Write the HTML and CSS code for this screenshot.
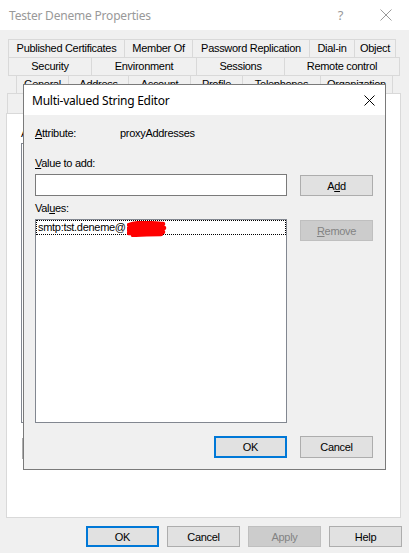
FILE: index.html
```html
<!DOCTYPE html>
<html lang="en">
<head>
    <meta charset="UTF-8">
    <meta name="viewport" content="width=device-width, initial-scale=1.0">
    <title>Tester Deneme Properties</title>
    <link rel="stylesheet" href="styles.css">
</head>
<body>
    <div class="window">
        <div class="titlebar">
            <span class="title">Tester Deneme Properties</span>
            <span class="help">?</span>
            <svg class="close" width="12" height="12" viewBox="0 0 12 12">
                <path d="M0.5 0.5 L11.5 11.5 M11.5 0.5 L0.5 11.5" stroke="#9a9a9a" stroke-width="1" fill="none"/>
            </svg>
        </div>

        <div class="sheet">
            <div class="tabrow row1">
                <div class="tab">Published Certificates</div>
                <div class="tab">Member Of</div>
                <div class="tab">Password Replication</div>
                <div class="tab">Dial-in</div>
                <div class="tab">Object</div>
            </div>
            <div class="tabrow row2">
                <div class="tab">Security</div>
                <div class="tab">Environment</div>
                <div class="tab">Sessions</div>
                <div class="tab">Remote control</div>
            </div>
            <div class="tabrow row3">
                <div class="tab">General</div>
                <div class="tab">Address</div>
                <div class="tab">Account</div>
                <div class="tab">Profile</div>
                <div class="tab">Telephones</div>
                <div class="tab">Organization</div>
            </div>
            <!-- front row is hidden by the editor, only its edges show -->
            <div class="tabrow row4">
                <div class="tab"></div>
                <div class="tab"></div>
                <div class="tab selected"></div>
            </div>

            <div class="page">
                <div class="page-label">Attributes:</div>
                <div class="attr-list"></div>
                <div class="page-buttons">
                    <button class="btn"></button>
                </div>
            </div>
        </div>

        <div class="actions">
            <button class="btn default">OK</button>
            <button class="btn">Cancel</button>
            <button class="btn" disabled>Apply</button>
            <button class="btn">Help</button>
        </div>
    </div>

    <!-- modal editor, sits on top of the properties window -->
    <div class="dialog">
        <div class="dialog-titlebar">
            <span class="dialog-title">Multi-valued String Editor</span>
            <svg class="dialog-close" width="11" height="11" viewBox="0 0 11 11">
                <path d="M0.5 0.5 L10.5 10.5 M10.5 0.5 L0.5 10.5" stroke="#000" stroke-width="1" fill="none"/>
            </svg>
        </div>
        <div class="dialog-body">
            <div class="attr-row">
                <span class="attr-name"><u>A</u>ttribute:</span>
                <span>proxyAddresses</span>
            </div>

            <div class="field-label"><u>V</u>alue to add:</div>
            <div class="editor-grid">
                <input type="text" class="value-input">
                <button class="btn side">A<u>d</u>d</button>
            </div>

            <div class="field-label values-label">Val<u>u</u>es:</div>
            <div class="editor-grid">
                <div class="listbox">
                    <div class="list-item">
                        <span>smtp:tst.deneme@</span>
                        <svg class="redact" width="40" height="16" viewBox="0 0 40 16">
                            <path d="M2 4 C10 1, 22 2, 36 3 M1 8 C12 6, 26 6, 37 7 M2 12 C12 10, 26 10, 36 11 M6 14 C16 13, 28 13, 34 13" stroke="#ff0000" stroke-width="4.5" stroke-linecap="round" fill="none"/>
                        </svg>
                    </div>
                </div>
                <button class="btn side" disabled><u>R</u>emove</button>
            </div>

            <div class="dialog-footer">
                <button class="btn default">OK</button>
                <button class="btn">Cancel</button>
            </div>
        </div>
    </div>
</body>
</html>
```

FILE: styles.css
```css
* {
    box-sizing: border-box;
}
body {
    margin: 0;
    background: #f0f0f0;
    font-family: "Liberation Sans", Arial, sans-serif;
    font-size: 11px;
    letter-spacing: -0.3px;
    color: #000;
}
.window {
    width: 409px;
    height: 553px;
    overflow: hidden;
}
.titlebar {
    height: 30px;
    background: #fff;
    display: flex;
    align-items: center;
    padding-left: 9px;
}
.title {
    font-family: "Noto Sans", sans-serif;
    font-size: 12px;
    letter-spacing: -0.2px;
    color: #999;
    flex: 1;
}
.help {
    font-family: "Noto Sans", sans-serif;
    font-size: 13px;
    color: #999;
    margin-right: 37px;
}
.close {
    margin-right: 17px;
}

.sheet {
    padding-top: 9px;
}
.tabrow {
    display: grid;
    height: 19px;
    margin-top: -1px;
}
.row1 {
    grid-template-columns: 116px 68px 117px 45px 42px;
    margin-left: 8px;
    margin-top: 0;
}
.row2 {
    grid-template-columns: 83px 105px 88px 116px;
    margin-left: 8px;
}
.row3 {
    grid-template-columns: 52px 60px 62px 52px 78px 73px;
    margin-left: 16px;
}
.row4 {
    grid-template-columns: 200px 60px 134px;
    margin-left: 7px;
    height: 21px;
}
.tab {
    border: 1px solid #d9d9d9;
    border-right: none;
    background: #f0f0f0;
    text-align: center;
    line-height: 16px;
    white-space: nowrap;
    overflow: hidden;
}
.tab:last-child {
    border-right: 1px solid #d9d9d9;
}
.tab.selected {
    background: #fff;
    border-bottom: none;
    position: relative;
    z-index: 1;
}

.page {
    margin: -1px 8px 0 6px;
    height: 405px;
    background: #fff;
    border: 1px solid #d9d9d9;
    padding: 13px 14px 0 14px;
}
.page-label {
    line-height: 13px;
}
.attr-list {
    height: 280px;
    margin-top: 3px;
    border: 1px solid #828790;
}
.page-buttons {
    display: flex;
    gap: 8px;
    margin-top: 15px;
    padding-left: 1px;
}

.btn {
    font-family: "Liberation Sans", Arial, sans-serif;
    font-size: 11px;
    letter-spacing: -0.3px;
    color: #000;
    background: #e1e1e1;
    border: 1px solid #adadad;
    width: 73px;
    height: 21px;
    padding: 0;
}
.btn.default {
    border: 2px solid #0078d7;
}
.btn:disabled {
    background: #cccccc;
    border-color: #bfbfbf;
    color: #838383;
}

.actions {
    display: flex;
    justify-content: flex-end;
    gap: 8px;
    margin-top: 8px;
    padding-right: 7px;
}

.dialog {
    position: absolute;
    z-index: 5;
    left: 23px;
    top: 84px;
    width: 363px;
    height: 386px;
    background: #f0f0f0;
    border: 1px solid #7a7a7a;
}
.dialog-titlebar {
    height: 30px;
    background: #fff;
    display: flex;
    align-items: center;
    padding-left: 8px;
}
.dialog-title {
    font-family: "Noto Sans", sans-serif;
    font-size: 12px;
    letter-spacing: -0.25px;
    flex: 1;
}
.dialog-close {
    margin-right: 10px;
}
.dialog-body {
    padding: 12px 12px 0 11px;
}
.attr-row {
    display: flex;
    line-height: 13px;
}
.attr-name {
    width: 85px;
}
.field-label {
    line-height: 13px;
    margin-top: 17px;
}
.values-label {
    margin-top: 6px;
}
.editor-grid {
    display: grid;
    grid-template-columns: 252px 73px;
    column-gap: 13px;
    align-items: start;
    margin-top: 4px;
}
.value-input {
    height: 22px;
    border: 1px solid #7a7a7a;
    background: #fff;
    margin: 0;
}
.btn.side {
    margin-top: 1px;
}
.listbox {
    height: 204px;
    background: #fff;
    border: 1px solid #828790;
}
.list-item {
    display: flex;
    align-items: center;
    height: 15px;
    border: 1px dotted #000;
    padding-left: 1px;
    line-height: 13px;
}
.redact {
    margin-left: 1px;
    margin-top: 2px;
}
.dialog-footer {
    display: flex;
    justify-content: flex-start;
    gap: 13px;
    margin-top: 13px;
    padding-left: 179px;
}
.dialog-footer .btn {
    height: 22px;
}
```
